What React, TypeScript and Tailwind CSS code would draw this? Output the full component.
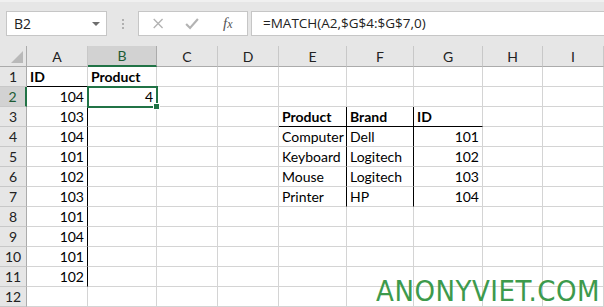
import React from 'react';

type Cell = {
  v?: string;
  bold?: boolean;
  right?: boolean;
  bR?: boolean;
  bB?: boolean;
};

const COLS = ['A', 'B', 'C', 'D', 'E', 'F', 'G', 'H', 'I'];

const idsA = ['104', '103', '104', '101', '102', '103', '101', '104', '101', '102'];
const lookup = [
  ['Computer', 'Dell', '101'],
  ['Keyboard', 'Logitech', '102'],
  ['Mouse', 'Logitech', '103'],
  ['Printer', 'HP', '104'],
];

const buildRows = (): Cell[][] => {
  const rows: Cell[][] = [];
  for (let r = 1; r <= 12; r++) {
    const row: Cell[] = COLS.map(() => ({}));
    if (r === 1) {
      row[0] = { v: 'ID', bold: true, bB: true };
      row[1] = { v: 'Product', bold: true, bB: true };
    }
    if (r >= 2 && r <= 11) {
      row[0] = { v: idsA[r - 2], right: true, bR: true };
    }
    if (r === 2) row[1] = { v: '4', right: true };
    if (r === 3) {
      row[4] = { v: 'Product', bold: true, bB: true, bR: true };
      row[5] = { v: 'Brand', bold: true, bB: true, bR: true };
      row[6] = { v: 'ID', bold: true, bB: true };
    }
    if (r >= 4 && r <= 7) {
      const d = lookup[r - 4];
      row[4] = { v: d[0], bR: true };
      row[5] = { v: d[1], bR: true };
      row[6] = { v: d[2], right: true };
    }
    rows.push(row);
  }
  return rows;
};

const rows = buildRows();

export default function App() {
  return (
    <div className="relative w-[604px] h-[307px] overflow-hidden bg-white font-['Lato',sans-serif] text-black">
      {/* formula bar */}
      <div className="h-[46px] bg-[#e6e6e6] border-t-2 border-[#f0f0f0] flex items-start pt-[9px] pl-[6px]">
        <div className="w-[101px] h-[25px] bg-white border border-[#c6c6c6] flex items-center justify-between pl-[7px] pr-[6px]">
          <span className="font-['Open_Sans',sans-serif] text-[14px] text-[#222]">B2</span>
          <span className="w-0 h-0 border-l-[4px] border-r-[4px] border-t-[4px] border-l-transparent border-r-transparent border-t-[#6d6d6d] mt-[1px]" />
        </div>
        <div className="w-[31px] h-[25px] flex flex-col items-center justify-center gap-[2px]">
          <span className="w-[2px] h-[2px] bg-[#b0b0b0]" />
          <span className="w-[2px] h-[2px] bg-[#b0b0b0]" />
          <span className="w-[2px] h-[2px] bg-[#b0b0b0]" />
        </div>
        <div className="relative w-[110px] h-[25px] bg-white border border-[#c6c6c6] flex items-center">
          <svg width="110" height="23" viewBox="0 0 110 23">
            <path d="M15 7 L24 16 M24 7 L15 16" stroke="#b3b3b3" strokeWidth="1.4" fill="none" />
            <path d="M48 12 L52 16 L60 7" stroke="#b3b3b3" strokeWidth="2.2" fill="none" />
          </svg>
          <span className="absolute left-[84px] top-[0px] font-['Liberation_Serif',serif] italic text-[15px] text-[#555]">
            f<span className="text-[12px]">x</span>
          </span>
        </div>
        <div className="ml-[3px] flex-1 h-[25px] bg-white border border-[#c6c6c6] border-r-0 flex items-center pl-[11px]">
          <span className="font-['Open_Sans',sans-serif] text-[13.5px] text-[#222]">=MATCH(A2,$G$4:$G$7,0)</span>
        </div>
      </div>

      {/* sheet */}
      <div className="grid grid-cols-[27px_61px_69px_61px_61px_68px_67px_69px_60px_61px]">
        {/* corner */}
        <div className="h-[21px] bg-[#e6e6e6] border-b border-r border-[#ababab] flex items-end justify-end pr-[3px] pb-[3px]">
          <svg width="12" height="12" viewBox="0 0 12 12">
            <polygon points="12,0 12,12 0,12" fill="#b9b9b9" />
          </svg>
        </div>
        {COLS.map((c) =>
          c === 'B' ? (
            <div key={c} className="h-[21px] bg-[#d2d2d2] border-r border-[#ababab] border-b-2 border-b-[#217346] flex items-center justify-center text-[14px] text-[#1d5b35]">
              {c}
            </div>
          ) : (
            <div key={c} className="h-[21px] bg-[#e6e6e6] border-r border-[#c8c8c8] border-b border-b-[#ababab] flex items-center justify-center text-[14px] text-[#222]">
              {c}
            </div>
          )
        )}

        {rows.map((row, ri) => (
          <React.Fragment key={ri}>
            {ri === 1 ? (
              <div className="h-[20px] bg-[#d2d2d2] border-b border-[#c8c8c8] border-r-2 border-r-[#217346] flex items-center justify-center text-[14px] text-[#1d5b35]">
                {ri + 1}
              </div>
            ) : (
              <div className="h-[20px] bg-[#e6e6e6] border-b border-[#c8c8c8] border-r border-r-[#ababab] flex items-center justify-center text-[14px] text-[#222]">
                {ri + 1}
              </div>
            )}
            {row.map((cell, ci) => (
              <div
                key={ci}
                className={`h-[20px] flex items-end pb-[1px] px-[3px] text-[14px] leading-[17px] whitespace-nowrap border-r border-b ${cell.bR ? 'border-r-black' : 'border-r-[#d4d4d4]'} ${cell.bB ? 'border-b-black' : 'border-b-[#d4d4d4]'} ${cell.right ? 'justify-end' : 'justify-start'} ${cell.bold ? 'font-bold' : ''}`}
              >
                {cell.v}
              </div>
            ))}
          </React.Fragment>
        ))}
      </div>

      {/* selection */}
      <div className="absolute left-[87px] top-[86px] w-[71px] h-[22px] border-2 border-[#217346] pointer-events-none" />
      <div className="absolute left-[153px] top-[103px] w-[7px] h-[7px] bg-[#217346] border border-white" />

      {/* watermark */}
      <div className="absolute right-[4px] bottom-[-6px] font-['DejaVu_Sans_Condensed','DejaVu_Sans',sans-serif] text-[29px] text-[#3d9a4c] tracking-[0.5px]">
        ANONYVIET.COM
      </div>
    </div>
  );
}
